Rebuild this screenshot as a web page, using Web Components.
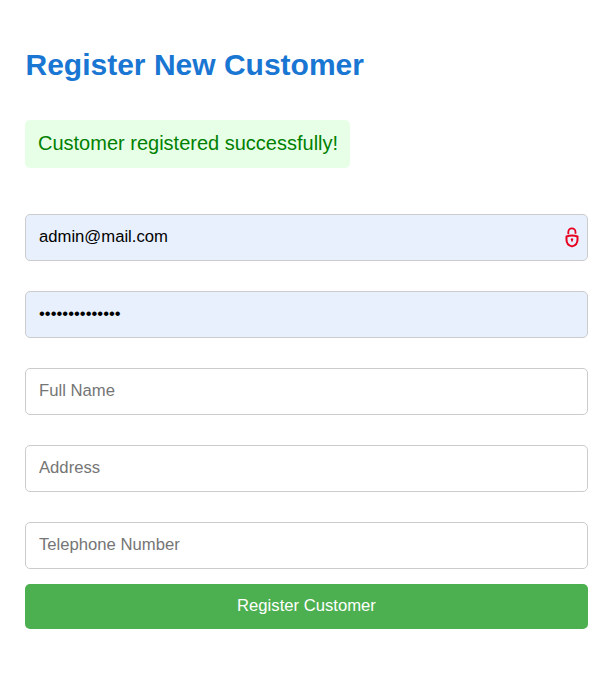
<!DOCTYPE html>
<html lang="en">
<head>
<meta charset="utf-8">
<title>Register New Customer</title>
<style>
html, body { margin: 0; background: #fff; font-family: "Liberation Sans", Arial, sans-serif; }
</style>
</head>
<body>
<register-page></register-page>
<script>
class StatusMessage extends HTMLElement {
  constructor() {
    super();
    this.attachShadow({ mode: "open" }).innerHTML = `
      <style>
        :host { display: block; box-sizing: border-box; width: 325px; height: 48px; padding: 0 13px; border-radius: 5px; background: #e6ffe6; color: green; font-size: 20px; line-height: 46px; white-space: nowrap; }
      </style><slot></slot>`;
  }
}
customElements.define("status-message", StatusMessage);

class LockIcon extends HTMLElement {
  constructor() {
    super();
    this.attachShadow({ mode: "open" }).innerHTML = `
      <style>:host { display: block; width: 16px; height: 22px; } svg { display: block; }</style>
      <svg width="16" height="22" viewBox="0 0 16 22" fill="none" stroke="#e8001f" stroke-width="2">
        <path d="M4.300 7.200V4.900a3.600 3.600 0 0 1 7.200 0v1.900" stroke-width="1.8"/>
        <path d="M2.500 9.500q5.500-1.900 11 0v3.200c0 3.600-2.500 5.900-5.500 6.700c-3-.8-5.500-3.100-5.500-6.700z" stroke-linejoin="round"/>
        <circle cx="8" cy="12.500" r="1.200" fill="#e8001f" stroke="none"/>
        <path d="M8 12.500v2.300" stroke-width="1.2"/>
      </svg>`;
  }
}
customElements.define("lock-icon", LockIcon);

class TextField extends HTMLElement {
  connectedCallback() {
    const root = this.attachShadow({ mode: "open" });
    root.innerHTML = `
      <style>
        :host { display: flex; align-items: center; box-sizing: border-box; height: 47px; padding: 0 7px 0 13px; border: 1px solid #ccc; border-radius: 5px; background: #fff; }
        :host([filled]) { background: #e8f0fe; }
        input { flex: 1; min-width: 0; padding: 0 0 2px; border: 0; outline: 0; background: transparent; color: #000; font: 16.67px "Liberation Sans", Arial, sans-serif; }
        input::placeholder { color: #757575; opacity: 1; }
      </style>
      <input><slot></slot>`;
    const input = root.querySelector("input");
    input.type = this.getAttribute("type") || "text";
    input.placeholder = this.getAttribute("placeholder") || "";
    input.value = this.getAttribute("value") || "";
  }
}
customElements.define("text-field", TextField);

class SubmitButton extends HTMLElement {
  constructor() {
    super();
    this.attachShadow({ mode: "open" }).innerHTML = `
      <style>
        :host { display: block; }
        button { display: block; width: 100%; height: 45px; padding: 0 0 2px; border: 0; border-radius: 5px; background: #4caf50; color: #fff; font: 16.67px "Liberation Sans", Arial, sans-serif; }
      </style><button type="button"><slot></slot></button>`;
  }
}
customElements.define("submit-button", SubmitButton);

class RegisterPage extends HTMLElement {
  constructor() {
    super();
    this.attachShadow({ mode: "open" }).innerHTML = `
      <style>
        :host { display: block; box-sizing: border-box; height: 677px; padding: 47px 27px 0 25px; }
        h1 { margin: 0 0 38px; padding-left: .5px; color: #1976d2; font-size: 30px; line-height: 35px; font-weight: 700; white-space: nowrap; }
        .fields { display: grid; gap: 30px; margin: 46px 0 15px; }
      </style>
      <h1>Register New Customer</h1>
      <status-message>Customer registered successfully!</status-message>
      <div class="fields">
        <text-field filled value="admin@mail.com"><lock-icon></lock-icon></text-field>
        <text-field filled type="password" value="abcdefghijklmn"></text-field>
        <text-field placeholder="Full Name"></text-field>
        <text-field placeholder="Address"></text-field>
        <text-field placeholder="Telephone Number"></text-field>
      </div>
      <submit-button>Register Customer</submit-button>`;
  }
}
customElements.define("register-page", RegisterPage);
</script>
</body>
</html>
